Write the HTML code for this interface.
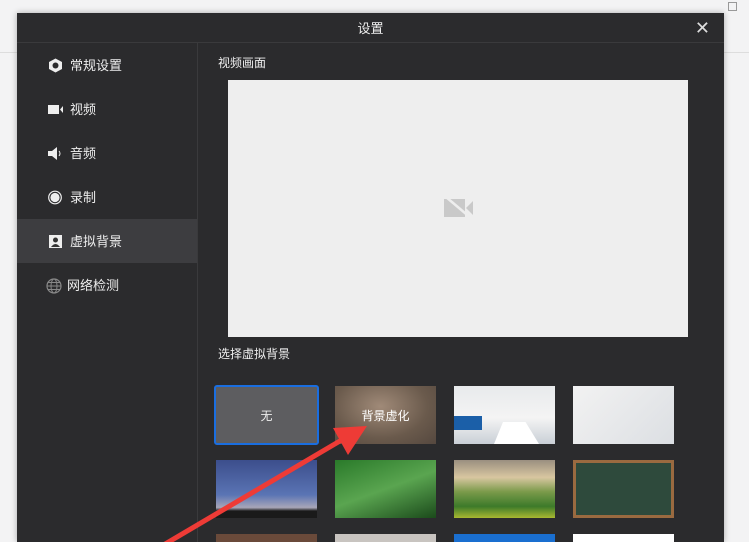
<!DOCTYPE html>
<html style="height:542px;overflow:hidden"><head><meta charset="utf-8"><style>
html,body{overflow:hidden}
body{margin:0;width:749px;height:542px;overflow:hidden;background:#f3f3f4;font-family:"Liberation Sans","Noto Sans CJK SC",sans-serif;position:relative}
.dlg{position:absolute;left:17px;top:13px;width:707px;height:529px;background:#2b2b2d;box-shadow:0 0 6px rgba(0,0,0,.3);overflow:hidden}
.title{position:absolute;left:0;top:0;width:707px;height:29px;border-bottom:1px solid #3a3a3c;color:#eee;font-size:13px;text-align:center;line-height:31px}
.side{position:absolute;left:0;top:30px;width:180px;height:500px;border-right:1px solid #3a3a3c}
.it{position:absolute;left:0;width:180px;height:44px;color:#eee;font-size:13px;line-height:46px}
.it span{position:absolute;left:53px}
.it svg{position:absolute;left:31px;top:15px}
.sel{background:#3d3d40}
.lbl{position:absolute;color:#eee;font-size:12px}
.th{position:absolute;width:101px;height:58px;overflow:hidden}
</style></head><body>
<div style="position:absolute;left:0;top:52px;width:17px;height:1px;background:#ddd"></div>
<div style="position:absolute;left:724px;top:52px;width:25px;height:1px;background:#ddd"></div>
<div style="position:absolute;left:728px;top:2px;width:7px;height:7px;border:1px solid #999"></div>
<div class="dlg">
<div class="title">设置<span style="position:absolute;right:14px;top:0;font-size:18px;color:#ddd">✕</span></div>
<div class="side">
<div class="it" style="top:0"><svg width="15" height="15" viewBox="0 0 15 15"><polygon points="7.5,0.5 14,4 14,11 7.5,14.5 1,11 1,4" fill="#eee"/><circle cx="7.5" cy="7.5" r="3" fill="#2b2b2d"/></svg><span>常规设置</span></div>
<div class="it" style="top:44px"><svg width="16" height="15" viewBox="0 0 16 15"><rect x="0" y="3" width="11" height="9" fill="#eee"/><polygon points="12,7.5 15,4 15,11" fill="#eee"/></svg><span>视频</span></div>
<div class="it" style="top:88px"><svg width="16" height="15" viewBox="0 0 16 15"><polygon points="0,5 4,5 9,1 9,14 4,10 0,10" fill="#eee"/><path d="M11 5q2 2.5 0 5" stroke="#eee" fill="none"/></svg><span>音频</span></div>
<div class="it" style="top:132px"><svg width="15" height="15" viewBox="0 0 15 15"><circle cx="7" cy="7.5" r="6.3" fill="none" stroke="#eee" stroke-width="1.2"/><circle cx="7" cy="7.5" r="4.6" fill="#eee"/></svg><span>录制</span></div>
<div class="it sel" style="top:176px"><svg width="15" height="15" viewBox="0 0 15 15"><rect x="1" y="1" width="13" height="13" fill="#eee"/><circle cx="7.5" cy="6" r="2.5" fill="#333"/><path d="M3 13q4.5-6 9 0z" fill="#333"/></svg><span>虚拟背景</span></div>
<div class="it" style="top:220px"><svg width="16" height="16" viewBox="0 0 16 16" style="left:29px"><circle cx="8" cy="8" r="7" fill="none" stroke="#888" stroke-width="1.2"/><ellipse cx="8" cy="8" rx="3" ry="7" fill="none" stroke="#888"/><path d="M1 8h14M2 4.5h12M2 11.5h12" stroke="#888"/></svg><span style="left:50px">网络检测</span></div>
</div>
<div class="lbl" style="left:201px;top:41px">视频画面</div>
<div style="position:absolute;left:211px;top:67px;width:460px;height:257px;background:#eeeeee">
<svg width="32" height="24" viewBox="0 0 32 24" style="position:absolute;left:215px;top:116px"><rect x="1" y="3" width="21" height="18" fill="#c9c9c9"/><polygon points="23,12 30,5 30,19" fill="#c9c9c9"/><path d="M3 1L29 23" stroke="#eee" stroke-width="2.5"/></svg>
</div>
<div class="lbl" style="left:201px;top:332px">选择虚拟背景</div>
</div>
<div class="th" style="left:214px;top:385px;width:101px;height:56px;background:#5d5d60;border:2px solid #1a6ee0;border-radius:3px;color:#eee;font-size:12px;text-align:center;line-height:58px">无</div>
<div class="th" style="left:335px;top:386px;height:58px;background:radial-gradient(ellipse at 45% 35%,#a08a78,#6a5a4c 60%,#55483f);color:#fff;font-size:12px;text-align:center;line-height:60px">背景虚化</div>
<div class="th" style="left:454px;top:386px;background:linear-gradient(180deg,#e8eaec 0%,#f4f4f4 55%,#c9cfd6 100%)"><div style="position:absolute;left:0;top:30px;width:28px;height:14px;background:#1b5fa8"></div><div style="position:absolute;left:40px;top:36px;width:45px;height:22px;background:#fff;clip-path:polygon(20% 0,70% 0,100% 100%,0 100%)"></div></div>
<div class="th" style="left:573px;top:386px;background:linear-gradient(135deg,#f2f2f2,#dcdfe3)"></div>
<div class="th" style="left:216px;top:460px;background:linear-gradient(180deg,#3c4e8c,#5a74b4 60%,#a8a6b8 82%,#1a1a1a 88%)"></div>
<div class="th" style="left:335px;top:460px;background:linear-gradient(160deg,#2a7a2a,#5aa550 50%,#1b4a1b)"></div>
<div class="th" style="left:454px;top:460px;background:linear-gradient(180deg,#9a8f80,#d8c6a0 30%,#7a9a4a 55%,#3d7a2a 80%,#a8b830)"></div>
<div class="th" style="left:573px;top:460px;background:#2e4a3c;border:3px solid #9a6a40;box-sizing:border-box"></div>
<div class="th" style="left:216px;top:534px;height:8px;background:#6a4a3a"></div>
<div class="th" style="left:335px;top:534px;height:8px;background:#c8c4c0"></div>
<div class="th" style="left:454px;top:534px;height:8px;background:#1a6fd0"></div>
<div class="th" style="left:573px;top:534px;height:8px;background:#fff"></div>
<svg width="749" height="542" style="position:absolute;left:0;top:0"><path d="M155 550L345 438" stroke="#ee3b36" stroke-width="5"/><polygon points="367,426 333,428 348,455" fill="#ee3b36"/></svg>
</body></html>
